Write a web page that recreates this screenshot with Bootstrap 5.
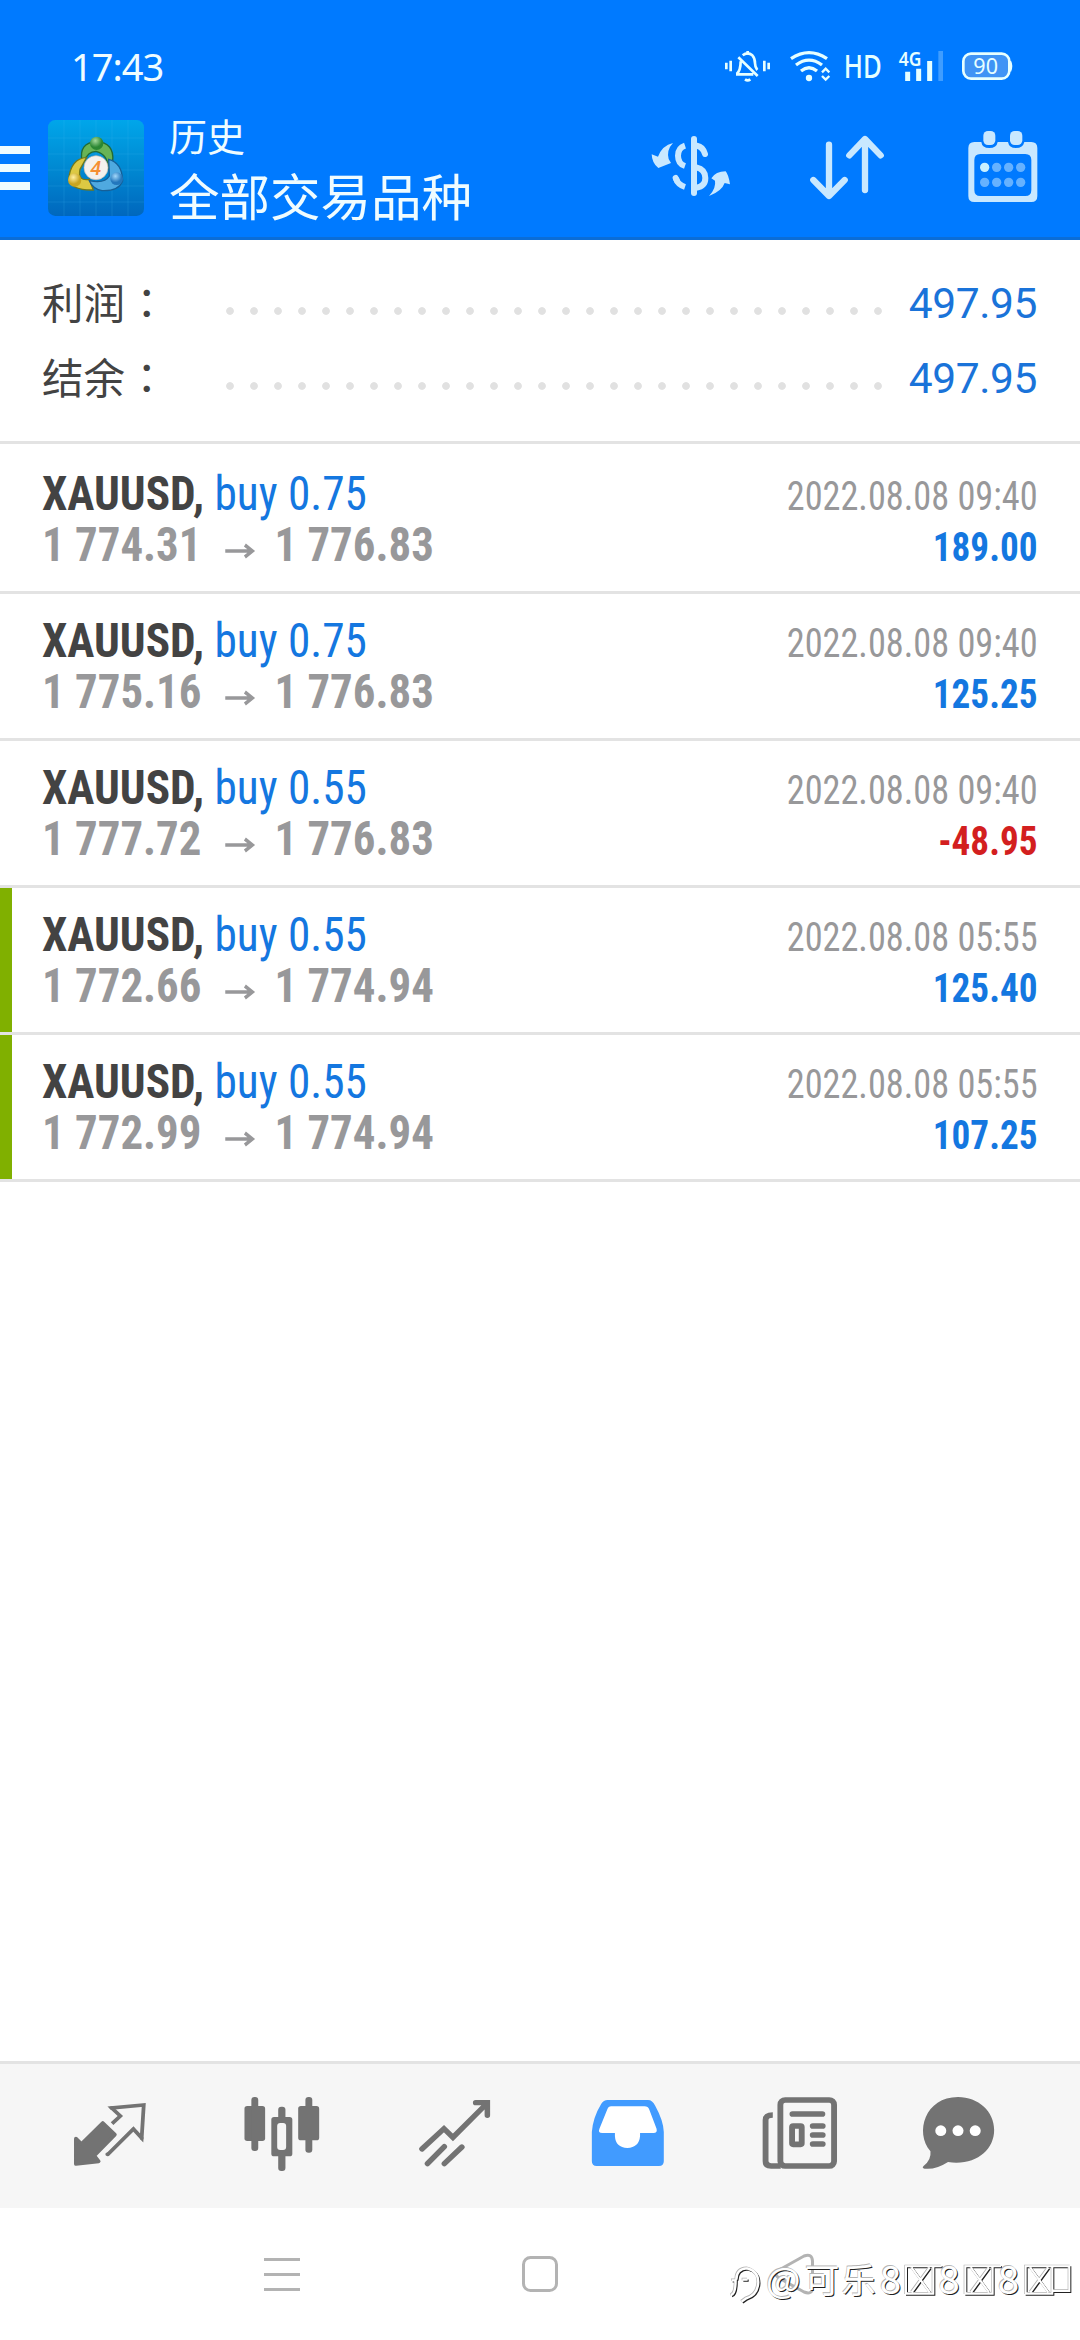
<!DOCTYPE html>
<html lang="zh-CN">
<head>
<meta charset="utf-8">
<meta name="viewport" content="width=device-width, initial-scale=1">
<title>历史</title>
<link href="https://cdn.jsdelivr.net/npm/bootstrap@5.3.0/dist/css/bootstrap.min.css" rel="stylesheet">
<style>
body{width:1080px;height:2340px;overflow:hidden;background:#fff;font-family:Roboto,"Noto Sans CJK SC",sans-serif;color:#434343}
svg{display:block;flex:none;overflow:visible}
.cjk{font-family:"Noto Sans CJK SC",sans-serif}
.app-head{height:240px;background:#007aff;border-bottom:3px solid #0b6dd6;color:#effcff}
.status-line{height:99px;padding:32px 68px 0 71px}
.clock{font:400 38px/66px "Noto Sans",sans-serif;letter-spacing:-1px}
.title-line{height:138px;padding-right:35px}
.burger{width:30px;height:44px}
.burger i{height:8px;background:#effcff}
.logo-box{margin:0 25px 0 18px}
.ttl-a{font-size:38px;line-height:52px}
.ttl-b{font-size:50.5px;line-height:67px}
.head-tools{gap:72px}
.totals{height:204px;padding:26px 43px 0 42px;border-bottom:3px solid #e3e3e3}
.total-line{height:75px}
.total-label{width:176px;font-size:41.5px;line-height:70px}
.wide-colon{font-family:"Noto Sans CJK TC",sans-serif;margin-left:1px}
.leader{background:radial-gradient(circle at 12px 45px,#e1e1e1 3.4px,transparent 4.3px) 0 0/24px 75px repeat-x}
.total-value{width:147px;font-size:42.5px;line-height:75px;letter-spacing:-.4px;color:#1a73d9}
.deal{height:147px;padding:21px 42px 0 42px;border-bottom:3px solid #e3e3e3;font-family:"Roboto Condensed",Roboto,sans-serif;font-stretch:75%}
.deal:first-child{height:150px;padding-top:24px}
.deal.marked{box-shadow:inset 12px 0 #80b000}
.line-a,.line-b{font-size:48px;line-height:51px;white-space:pre;transform:scaleX(.943);transform-origin:0 0}
.line-b{color:#98989a;transform:scaleX(.935)}
.buy{color:#1477e0}
.when{font-size:40px;line-height:51px;color:#98989a;margin-top:3px;transform:scaleX(.907);transform-origin:100% 0}
.gain{font-size:40px;line-height:51px;color:#1477e0;transform:scaleX(.93);transform-origin:100% 0}
.loss{color:#d31f1f}
.line-b svg{margin:25px 21px 0 24px}
.tabs-bar{height:147px;background:#f6f6f6;border-top:3px solid #e3e3e3;padding-left:23.5px;color:#737373}
.tab-cell{width:172.6px}
.tab-cell:last-child{width:144px}
.sys-bar{height:132px}
.stamp{right:0;bottom:30px}
</style>
</head>
<body class="d-flex flex-column position-relative">
<header class="app-head flex-shrink-0">
  <div class="status-line d-flex align-items-center">
    <span class="clock me-auto">17:43</span>
    <svg width="287" height="36" viewBox="27 24 861 108" fill="none" stroke="#e6ffff" stroke-width="8">
      <path d="M31 68V88M44 62V94M145 62V94M158 68V88"/>
      <path d="M67 52 125 108M60 103H112M62 102Q74 92 74 64M80 46Q95 34 109 46Q117 54 117 70Q117 82 124 90"/>
      <path d="M95 33V44M87 118Q95 124 103 118"/>
      <path d="M225 56Q279 20 333 56M240 75Q279 46 318 75M255 93Q279 74 303 93" stroke-width="10"/>
      <circle cx="279" cy="114" r="9.500" fill="#e6ffff" stroke="none"/>
      <path d="M318 97 329 86 340 97M318 108 329 119 340 108" stroke-width="7"/>
      <text x="383" y="113" font-family="Noto Sans,sans-serif" font-weight="500" font-size="100" textLength="114" lengthAdjust="spacingAndGlyphs" fill="#e6ffff" stroke="none">HD</text>
      <text x="548" y="77" font-family="Noto Sans,sans-serif" font-weight="600" font-size="57" textLength="68" lengthAdjust="spacingAndGlyphs" fill="#e6ffff" stroke="none">4G</text>
      <path d="M575 95V123M608 86V123M641 63V123" stroke-width="15"/>
      <path d="M674 33V123" stroke="#3f9dff" stroke-width="14"/>
      <rect x="742" y="41" width="138" height="75" rx="23" fill="#3f94f5" stroke-width="8"/>
      <path d="M882 64Q889 78 882 94" stroke-width="7"/>
      <text x="772" y="101" font-family="Noto Sans,sans-serif" font-size="67" textLength="74" lengthAdjust="spacingAndGlyphs" fill="#e6ffff" stroke="none">90</text>
    </svg>
  </div>
  <div class="title-line d-flex align-items-center">
    <div class="burger d-flex flex-column justify-content-between"><i></i><i></i><i></i></div>
    <svg class="logo-box" width="96" height="96" viewBox="24 18 288 288">
      <defs>
        <linearGradient id="sea" x1="0" y1="0" x2="0" y2="1"><stop offset="0" stop-color="#00a6ea"/><stop offset=".5" stop-color="#0089d2"/><stop offset="1" stop-color="#0067bd"/></linearGradient>
        <radialGradient id="gn" cx=".4" cy=".3"><stop offset="0" stop-color="#a4d99b"/><stop offset="1" stop-color="#2b8733"/></radialGradient>
        <radialGradient id="yl" cx=".4" cy=".3"><stop offset="0" stop-color="#fff0a0"/><stop offset="1" stop-color="#c8a520"/></radialGradient>
        <radialGradient id="bl" cx=".4" cy=".3"><stop offset="0" stop-color="#a3d8fa"/><stop offset="1" stop-color="#2377bd"/></radialGradient>
      </defs>
      <rect x="24" y="18" width="288" height="288" rx="22" fill="url(#sea)"/>
      <path d="M72 18V306M120 18V306M168 18V306M216 18V306M264 18V306M24 72H312M24 120H312M24 168H312M24 216H312M24 264H312" stroke="#42c3f5" stroke-opacity=".18" stroke-width="3"/>
      <path d="M126 140Q116 88 168 82Q224 86 218 142L204 166Q206 122 168 112Q142 114 134 140Z" fill="#68b456" stroke="#226b35" stroke-width="4"/>
      <path d="M140 130Q92 134 86 196Q96 230 160 228L148 196Q112 202 120 166Z" fill="#dcc943" stroke="#73791a" stroke-width="4"/>
      <path d="M206 136Q246 146 248 200Q236 232 186 230Q158 224 148 200Q194 210 208 186Z" fill="#4fa9e0" stroke="#155f97" stroke-width="4"/>
      <circle cx="170" cy="88" r="20" fill="url(#gn)"/><circle cx="104" cy="198" r="20" fill="url(#yl)"/><circle cx="230" cy="194" r="19" fill="url(#bl)"/>
      <circle cx="168" cy="161" r="36" fill="#f5f1ed" stroke="#cbbdad" stroke-width="2"/>
      <text x="167" y="183" text-anchor="middle" font-family="Roboto,sans-serif" font-size="60" font-weight="500" font-style="italic" fill="#f58f33">4</text>
    </svg>
    <div class="cjk me-auto"><div class="ttl-a">历史</div><div class="ttl-b">全部交易品种</div></div>
    <div class="head-tools d-flex">
      <svg width="84" height="84" viewBox="144 318 252 252" fill="none" stroke="#c9e8ff" stroke-width="18" stroke-linecap="round">
        <path d="M279 357V519"/>
        <path d="M252 377Q231 384 231 407Q231 431 252 438M224 474Q230 494 252 501" stroke-linecap="butt"/>
        <path d="M288 377Q306 380 312 402M224 474Q226 478 228 482"/>
        <path d="M286 442Q313 448 313 474Q313 499 286 503" stroke-linecap="butt"/>
        <path d="M216 369Q184 376 171 410L152 403Q153 430 172 444L210 429L203 417Q196 390 216 369ZM324 528Q346 504 342 482L331 475Q344 454 374 454Q383 465 387 493L371 489Q362 514 324 528Z" fill="#c9e8ff" stroke="none"/>
      </svg>
      <svg width="84" height="84" viewBox="612 318 252 252" fill="none" stroke="#c9e8ff" stroke-width="19" stroke-linecap="round" stroke-linejoin="round">
        <path d="M684 374V524M637 480 684 528 731 480M792 510V362M745 406 792 357 839 406"/>
      </svg>
      <svg width="84" height="84" viewBox="1082 318 252 252">
        <path fill="#c9e8ff" fill-rule="evenodd" d="M1122 366H1143Q1145 384 1167 384T1192 366H1223Q1226 384 1247 384T1272 366H1293Q1311 366 1311 384V528Q1311 546 1293 546H1122Q1104 546 1104 528V384Q1104 366 1122 366ZM1140 402Q1122 402 1122 420V510Q1122 528 1140 528H1275Q1293 528 1293 510V420Q1293 402 1275 402Z"/>
        <rect x="1149" y="333" width="36" height="42" rx="14" fill="#c9e8ff"/><rect x="1229" y="333" width="37" height="42" rx="14" fill="#c9e8ff"/>
        <g fill="#66b2ff"><circle cx="1153" cy="442" r="14" fill="#c9f0ff"/><circle cx="1189" cy="442" r="14"/><circle cx="1225" cy="442" r="14"/><circle cx="1261" cy="442" r="14"/><circle cx="1153" cy="487" r="14"/><circle cx="1189" cy="487" r="14"/><circle cx="1225" cy="487" r="14"/><circle cx="1261" cy="487" r="14"/></g>
      </svg>
    </div>
  </div>
</header>

<section class="totals flex-shrink-0">
  <div class="total-line d-flex"><span class="total-label cjk">利润<span class="wide-colon" lang="zh-TW">：</span></span><span class="leader flex-grow-1"></span><span class="total-value text-end">497.95</span></div>
  <div class="total-line d-flex"><span class="total-label cjk">结余<span class="wide-colon" lang="zh-TW">：</span></span><span class="leader flex-grow-1"></span><span class="total-value text-end">497.95</span></div>
</section>

<main class="flex-grow-1">
  <div class="deal d-flex justify-content-between">
    <div><div class="line-a"><b>XAUUSD,</b> <span class="buy">buy 0.75</span></div><div class="line-b d-flex"><b>1 774.31</b><svg width="33" height="14" viewBox="0 0 31 14" fill="none" stroke="#98989a" stroke-width="3.500"><path d="M0 7H29M21 1 29 7 21 13"/></svg><b>1 776.83</b></div></div>
    <div class="text-end"><div class="when">2022.08.08 09:40</div><b class="gain d-block">189.00</b></div>
  </div>
  <div class="deal d-flex justify-content-between">
    <div><div class="line-a"><b>XAUUSD,</b> <span class="buy">buy 0.75</span></div><div class="line-b d-flex"><b>1 775.16</b><svg width="33" height="14" viewBox="0 0 31 14" fill="none" stroke="#98989a" stroke-width="3.500"><path d="M0 7H29M21 1 29 7 21 13"/></svg><b>1 776.83</b></div></div>
    <div class="text-end"><div class="when">2022.08.08 09:40</div><b class="gain d-block">125.25</b></div>
  </div>
  <div class="deal d-flex justify-content-between">
    <div><div class="line-a"><b>XAUUSD,</b> <span class="buy">buy 0.55</span></div><div class="line-b d-flex"><b>1 777.72</b><svg width="33" height="14" viewBox="0 0 31 14" fill="none" stroke="#98989a" stroke-width="3.500"><path d="M0 7H29M21 1 29 7 21 13"/></svg><b>1 776.83</b></div></div>
    <div class="text-end"><div class="when">2022.08.08 09:40</div><b class="gain loss d-block">-48.95</b></div>
  </div>
  <div class="deal marked d-flex justify-content-between">
    <div><div class="line-a"><b>XAUUSD,</b> <span class="buy">buy 0.55</span></div><div class="line-b d-flex"><b>1 772.66</b><svg width="33" height="14" viewBox="0 0 31 14" fill="none" stroke="#98989a" stroke-width="3.500"><path d="M0 7H29M21 1 29 7 21 13"/></svg><b>1 774.94</b></div></div>
    <div class="text-end"><div class="when">2022.08.08 05:55</div><b class="gain d-block">125.40</b></div>
  </div>
  <div class="deal marked d-flex justify-content-between">
    <div><div class="line-a"><b>XAUUSD,</b> <span class="buy">buy 0.55</span></div><div class="line-b d-flex"><b>1 772.99</b><svg width="33" height="14" viewBox="0 0 31 14" fill="none" stroke="#98989a" stroke-width="3.500"><path d="M0 7H29M21 1 29 7 21 13"/></svg><b>1 774.94</b></div></div>
    <div class="text-end"><div class="when">2022.08.08 05:55</div><b class="gain d-block">107.25</b></div>
  </div>
</main>

<nav class="tabs-bar d-flex align-items-center flex-shrink-0">
  <div class="tab-cell d-flex justify-content-center">
    <svg width="84" height="84" viewBox="198 132 244 252" preserveAspectRatio="none" fill="none" stroke="currentColor" stroke-width="11">
      <path d="M221 266 237 282 299 219 334 254 274 317 287 334 221 342Z" fill="currentColor" stroke-linejoin="round"/>
      <path d="M326 221 350 198 325 174 418 165 412 264 388 237 312 315" stroke-linejoin="miter"/><path d="M325 174H324M412 264V265M312 313H313" stroke-linecap="round"/>
    </svg>
  </div>
  <div class="tab-cell d-flex justify-content-center">
    <svg width="84" height="84" viewBox="696 132 244 252" preserveAspectRatio="none" fill="currentColor">
      <rect x="709" y="168" width="60" height="105" rx="8"/><rect x="865" y="168" width="61" height="103" rx="8"/>
      <rect x="729" y="141" width="20" height="162" rx="9"/><rect x="886" y="141" width="20" height="167" rx="9"/><rect x="807" y="170" width="21" height="193" rx="9"/>
      <rect x="787" y="201" width="61" height="118" rx="8"/><rect x="804" y="219" width="26" height="81" rx="9" fill="#f6f6f6"/>
    </svg>
  </div>
  <div class="tab-cell d-flex justify-content-center">
    <svg width="84" height="84" viewBox="1195 132 244 252" preserveAspectRatio="none" fill="none" stroke="currentColor" stroke-width="16" stroke-linecap="round">
      <path d="M1221 297 1285 236 1311 262 1408 162M1377 158H1411V196M1237 341 1286 290M1286 341 1337 291" stroke-linejoin="miter"/>
    </svg>
  </div>
  <div class="tab-cell d-flex justify-content-center">
    <svg width="84" height="84" viewBox="130 132 244 252" preserveAspectRatio="none" fill="#419bff">
      <path d="M193 150H310Q323 150 331 167Q355 212 356 246V334Q356 348 342 348H161Q147 348 147 334V246Q150 203 174 162Q181 150 193 150Z"/>
      <path d="M203 169H300Q310 169 314 179L335 236Q338 249 326 249H287V259Q284 293 250 294Q216 293 214 259V249H177Q164 249 169 236L192 178Q195 169 203 169Z" fill="#fff"/>
    </svg>
  </div>
  <div class="tab-cell d-flex justify-content-center">
    <svg width="84" height="84" viewBox="634 132 244 252" preserveAspectRatio="none" fill="none" stroke="currentColor" stroke-width="17">
      <rect x="699" y="150" width="156" height="198" rx="14"/><path d="M677 195Q656 195 656 210V334Q656 348 672 348H700"/>
      <path d="M734 192H821M793 228H822M793 255H822M793 282H822" stroke-linecap="round"/><rect x="733" y="228" width="28" height="55" rx="3"/>
    </svg>
  </div>
  <div class="tab-cell d-flex justify-content-center">
    <svg width="84" height="84" viewBox="1091 132 244 252" preserveAspectRatio="none" fill="currentColor">
      <path d="M1213 141C1272 141 1318 184 1318 240C1318 302 1262 348 1184 336Q1148 360 1116 356Q1107 354 1113 348Q1136 330 1133 304C1086 246 1118 141 1213 141Z"/>
      <g fill="#fff"><circle cx="1163" cy="242" r="16"/><circle cx="1213" cy="242" r="16"/><circle cx="1263" cy="242" r="16"/></g>
    </svg>
  </div>
</nav>

<footer class="sys-bar flex-shrink-0 d-flex justify-content-center align-items-center">
  <svg width="560" height="44" viewBox="260 2252 560 44" fill="none" stroke="#b3b3b3" stroke-width="3">
    <path d="M264 2259.500H300M264 2274.500H300M264 2289.500H300"/>
    <rect x="523.500" y="2257.500" width="33" height="33" rx="7"/>
    <path d="M779 2270 804 2256Q812 2253 812.500 2261V2288Q812 2295 804 2292L779 2278Q773 2274 779 2270Z"/>
  </svg>
</footer>

<svg class="stamp position-absolute" width="365" height="65" viewBox="0 0 1095 195" font-family="Noto Sans CJK SC,sans-serif" font-size="104">
  <defs>
    <g id="stampmark">
      <path d="M48 150Q62 148 62 106H50M64 104Q64 72 96 70Q130 78 130 112Q128 150 94 160L80 170M82 104H98" fill="none" stroke="currentColor" stroke-width="7"/>
      <g fill="currentColor"><text x="153" y="144" textLength="104" lengthAdjust="spacingAndGlyphs">@</text><text x="269" y="143" textLength="214">可乐</text><g font-size="116"><text x="494" y="147">8</text><text x="670" y="147">8</text><text x="848" y="147">8</text></g></g>
      <path d="M573 64H655V146H573ZM590 68 644 142M644 68 590 142M655 64H680M751 64H833V146H751ZM768 68 822 142M822 68 768 142M833 64H858M932 64H1012V146H932ZM946 68 1000 142M1000 68 946 142M1012 64H1063V138H1012Z" fill="none" stroke="currentColor" stroke-width="6"/>
    </g>
  </defs>
  <use href="#stampmark" x="3" y="3" color="#222"/><use href="#stampmark" x="-2" y="-2" color="#b4b4b4"/><use href="#stampmark" color="#fff"/>
</svg>
<script src="https://cdn.jsdelivr.net/npm/bootstrap@5.3.0/dist/js/bootstrap.bundle.min.js"></script>
</body>
</html>
